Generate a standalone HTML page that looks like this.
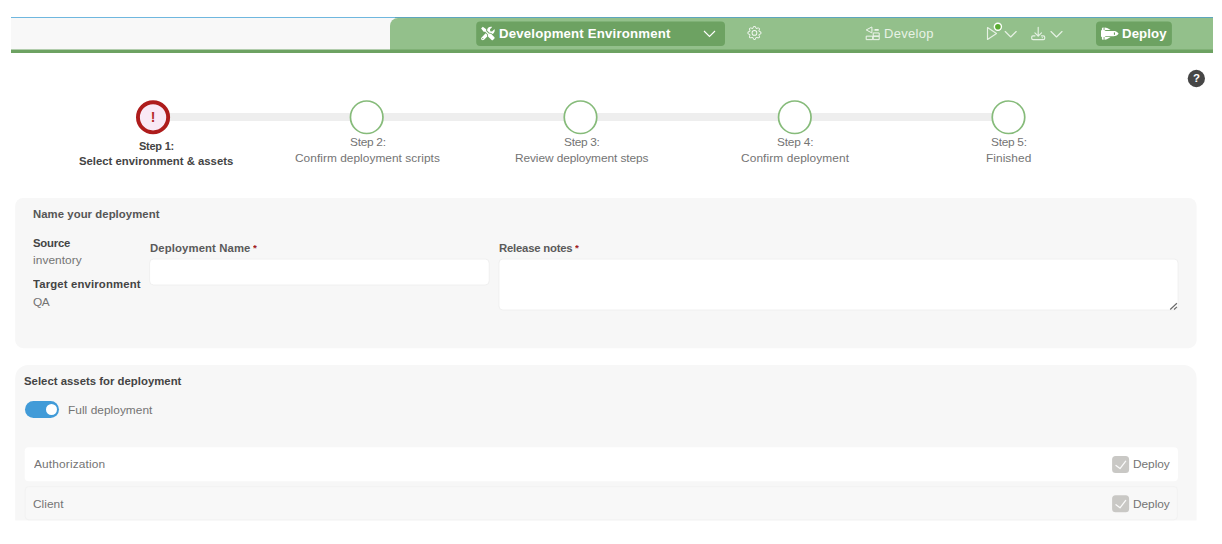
<!DOCTYPE html>
<html lang="en">
<head>
<meta charset="utf-8">
<title>Deploy</title>
<style>
*{box-sizing:border-box;margin:0;padding:0}
html,body{width:1222px;height:544px;overflow:hidden;background:#fff;font-family:"Liberation Sans",sans-serif;color:#4a4a4a}
.abs{position:absolute}
#hdr{left:11px;top:17px;width:1202px;height:36px;background:#f8f8f8;border-top:1px solid #6fb7df}
#gbar{left:0;top:31px;width:1202px;height:4px;background:linear-gradient(to bottom,rgba(109,162,98,.5) 0,rgba(109,162,98,.5) 1px,#6da262 1px)}
#tline{left:384px;top:-1px;width:818px;height:1px;background:#5ea6bd}
#tab{left:379px;top:0;width:823px;height:32px;background:#93c08b;border-top-left-radius:8px}
#envsel{left:476px;top:21.5px;width:249px;height:24.5px;background:#6da262;border-radius:4px}
.w{color:#fff}
.t{white-space:nowrap;line-height:1}
#deploybtn{left:1096px;top:21.5px;width:76px;height:24.5px;background:#6da262;border-radius:4px}
#help{left:1187.5px;top:69.5px;width:17.5px;height:17.5px;border-radius:50%;background:#3c3c3c;color:#fff;font-weight:bold;font-size:12px;text-align:center;line-height:17.5px}
#bar{left:153px;top:113px;width:856px;height:8px;background:#eeeeee}
.c{width:34.5px;height:34.5px;border-radius:50%;background:#fff;border:1.4px solid #82b775;top:100px}
.c1{border:4px solid #ae1c1c;background:#f9e9f5}
.st{font-size:11.2px;text-align:center;width:220px;line-height:15.3px;color:#555;letter-spacing:.35px}
.panel{background:#f7f7f7}
.lbl{font-weight:bold;font-size:11.2px;color:#444}
.val{font-size:11.2px;color:#555}
.inp{background:#fff;border:1px solid #eee;border-radius:4px}
.row{left:25px;width:1153px;height:34px;border-radius:4px}
.cb{width:17px;height:17px;border-radius:3px;background:#c9c9c5}
</style>
</head>
<body>
<div id="hdr" class="abs"><div id="tab" class="abs"></div><div id="gbar" class="abs"></div><div id="tline" class="abs"></div></div>

<svg id="hicons" class="abs" style="left:0;top:0" width="1222" height="60" viewBox="0 0 1222 60">
<rect x="476.200" y="21.400" width="248.800" height="24.500" rx="4" fill="#6da262"/><rect x="1096" y="21.400" width="75.900" height="24.500" rx="4" fill="#6da262"/>
<g transform="translate(481.100 26.700) scale(0.02656)"><path fill="#fff" d="M501.100 395.700L384 278.600c-23.100-23.100-57.600-27.600-85.400-13.900L192 158.100V96L64 0 0 64l96 128h62.100l106.600 106.600c-13.600 27.800-9.200 62.300 13.900 85.400l117.100 117.100c14.600 14.600 38.200 14.600 52.700 0l52.700-52.700c14.500-14.600 14.500-38.200 0-52.700zM331.700 225c28.300 0 54.900 11 74.900 31l19.400 19.400c15.800-6.900 30.800-16.500 43.800-29.500 37.100-37.100 49.700-89.300 37.900-136.700-2.200-9-13.500-12.100-20.100-5.500l-74.400 74.400-67.900-11.300L334 98.900l74.400-74.400c6.600-6.600 3.400-17.900-5.700-20.200-47.400-11.700-99.600.9-136.600 37.900-28.500 28.500-41.900 66.100-41.200 103.600l82.100 82.100c8.100-1.900 16.500-2.900 24.700-2.900zm-103.900 82l-56.700-56.700L18.700 402.800c-25 25-25 65.500 0 90.500s65.500 25 90.500 0l123.600-123.600c-7.600-19.900-9.900-41.600-5-62.700zM64 472c-13.200 0-24-10.800-24-24 0-13.300 10.700-24 24-24s24 10.700 24 24c0 13.200-10.700 24-24 24z"/></g>
<g transform="translate(703 30)"><path d="M1 1 L6.500 6.500 L12 1" fill="none" stroke="#fff" stroke-width="1.100"/></g>
<g transform="translate(747.450 25.900) scale(0.875)" opacity=".92"><g fill="#fff"><path d="M8 4.754a3.246 3.246 0 1 0 0 6.492 3.246 3.246 0 0 0 0-6.492zM5.754 8a2.246 2.246 0 1 1 4.492 0 2.246 2.246 0 0 1-4.492 0z"/><path d="M9.796 1.343c-.527-1.790-3.065-1.790-3.592 0l-.094.319a.873.873 0 0 1-1.255.520l-.292-.160c-1.640-.892-3.433.902-2.540 2.541l.159.292a.873.873 0 0 1-.520 1.255l-.319.094c-1.790.527-1.790 3.065 0 3.592l.319.094a.873.873 0 0 1 .520 1.255l-.160.292c-.892 1.640.901 3.434 2.541 2.540l.292-.159a.873.873 0 0 1 1.255.520l.094.319c.527 1.790 3.065 1.790 3.592 0l.094-.319a.873.873 0 0 1 1.255-.520l.292.160c1.640.893 3.434-.902 2.540-2.541l-.159-.292a.873.873 0 0 1 .520-1.255l.319-.094c1.790-.527 1.790-3.065 0-3.592l-.319-.094a.873.873 0 0 1-.520-1.255l.160-.292c.893-1.640-.902-3.433-2.541-2.540l-.292.159a.873.873 0 0 1-1.255-.520l-.094-.319zm-2.633.283c.246-.835 1.428-.835 1.674 0l.094.319a1.873 1.873 0 0 0 2.693 1.115l.291-.160c.764-.415 1.600.420 1.184 1.185l-.159.292a1.873 1.873 0 0 0 1.116 2.692l.318.094c.835.246.835 1.428 0 1.674l-.319.094a1.873 1.873 0 0 0-1.115 2.693l.160.291c.415.764-.420 1.600-1.185 1.184l-.291-.159a1.873 1.873 0 0 0-2.693 1.116l-.094.318c-.246.835-1.428.835-1.674 0l-.094-.319a1.873 1.873 0 0 0-2.692-1.115l-.292.160c-.764.415-1.600-.420-1.184-1.185l.159-.291A1.873 1.873 0 0 0 1.945 8.930l-.319-.094c-.835-.246-.835-1.428 0-1.674l.319-.094A1.873 1.873 0 0 0 3.060 4.377l-.160-.292c-.415-.764.420-1.600 1.185-1.184l.292.159a1.873 1.873 0 0 0 2.692-1.115l.094-.319z"/></g></g>
<g transform="translate(865.700 26.450)" opacity=".85"><g fill="none" stroke="#fff" stroke-width="1" stroke-linejoin="round"><path d="M0.500 3.500 L6.200 0.500 L6.200 6.500 Z"/><rect x="7.500" y="6.500" width="6" height="3.200"/><rect x="0.500" y="9.700" width="6.500" height="3.500"/><rect x="7.500" y="9.700" width="6" height="3.500"/></g><rect x="8.800" y="2.600" width="4.300" height="1.800" rx=".6" fill="#fff"/><path d="M6.200 3.500 H9" stroke="#fff" stroke-width=".7" stroke-opacity=".5"/></g>
<g><g fill="none" stroke="#e6f1e4" stroke-width="1.150" stroke-linecap="round" stroke-linejoin="round"><path d="M987.500 27.500 L996.500 33.500 L987.500 39.500 Z"/><path d="M1005.200 31.500 L1010.700 37 L1016.200 31.500"/><path d="M1051 31.500 L1056.500 37 L1062 31.500"/><path d="M1038.200 27.200 V36.200 M1034.900 32.900 L1038.200 36.200 L1041.500 32.900"/><path d="M1035 35.800 H1033 Q1031.700 35.800 1031.700 37.100 V38.300 Q1031.700 39.600 1033 39.600 H1043.400 Q1044.700 39.600 1044.700 38.300 V37.100 Q1044.700 35.800 1043.400 35.800 H1041.400"/></g><circle cx="1042.300" cy="37.700" r=".6" fill="#e6f1e4"/><circle cx="997.900" cy="26.800" r="4.200" fill="#fff"/><circle cx="997.900" cy="26.800" r="2.800" fill="#5aab32"/></g>
<g id="shuttle" transform="translate(1101 26.600) scale(0.02734)"><path fill="#fff" d="M130 480c40.600 0 80.400-11 115.200-31.900L352 384l-224 0 0 96h2zM352 128L245.200 63.900C210.400 43 170.600 32 130 32h-2v96l224 0zM96 128l0-96H80C53.500 32 32 53.500 32 80v48h8c-22.100 0-40 17.900-40 40v16V328v16c0 22.100 17.900 40 40 40H32v48c0 26.500 21.500 48 48 48H96l0-96h8c26.200 0 49.400-12.600 64-32H456c69.300 0 135-22.700 179.200-81.600c6.400-8.500 6.400-20.300 0-28.800C591 182.700 525.300 160 456 160H168c-14.600-19.400-37.800-32-64-32l-8 0zM512 243.600v24.900c0 19.600-15.900 35.600-35.600 35.600c-2.500 0-4.400-2-4.400-4.400V212.400c0-2.500 2-4.400 4.400-4.400c19.600 0 35.600 15.900 35.600 35.600z"/></g>
</svg>
<svg class="abs" style="left:1180px;top:65px" width="32" height="28" viewBox="1180 65 32 28"><circle cx="1196.350" cy="78.500" r="8.650" fill="#464646"/><text x="1196.400" y="82.400" text-anchor="middle" font-family="Liberation Sans, sans-serif" font-weight="bold" font-size="11.500" fill="#fff">?</text></svg>

<div id="bar" class="abs"></div>
<svg class="abs" style="left:0;top:95px" width="1222" height="45" viewBox="0 95 1222 45"><circle cx="153.050" cy="117.300" r="15.100" fill="#f9e9f6" stroke="#ae1c1c" stroke-width="3.900"/><g fill="#fff" stroke="#86bb7a" stroke-width="1.700"><circle cx="366.700" cy="117.250" r="16.250"/><circle cx="580.500" cy="117.250" r="16.250"/><circle cx="794.800" cy="117.250" r="16.250"/><circle cx="1008.500" cy="117.250" r="16.250"/></g></svg>
<div class="abs" style="left:143px;top:107.300px;width:20px;height:20px;line-height:20px;text-align:center;color:#b52a2a;font-weight:bold;font-size:14px">!</div>


<svg class="abs" style="left:0;top:190px" width="1222" height="354" viewBox="0 190 1222 354">
<rect x="15.200" y="197.900" width="1181.400" height="150.300" rx="8" fill="#f7f7f7"/>
<path d="M15.200 520.600 V378 a13 13 0 0 1 13 -13 H1183.600 a13 13 0 0 1 13 13 V520.600 Z" fill="#f7f7f7"/>
<rect x="149.600" y="259" width="339.600" height="26" rx="4" fill="#fff" stroke="#f0f0f0" stroke-width="1"/>
<rect x="498.900" y="259" width="679.200" height="51" rx="4" fill="#fff" stroke="#f0f0f0" stroke-width="1"/>
<path d="M1170.200 309.500 L1176.900 303.300 M1174 309.500 L1176.900 306.900" stroke="#6a6a6a" stroke-width="1.200" fill="none"/>
<rect x="24.700" y="447.200" width="1153.200" height="34" rx="4" fill="#fff"/>
<rect x="25.200" y="486.600" width="1152.200" height="33.200" rx="3.500" fill="#f8f8f8" stroke="#f2f2f2" stroke-width="1"/>
</svg>
<div class="abs" style="left:24.500px;top:400.800px;width:34.400px;height:17.300px;border-radius:9px;background:#419bd8"></div>
<div class="abs" style="left:45.700px;top:403.800px;width:11px;height:11px;border-radius:50%;background:#fff"></div>
<div class="abs" style="left:0;top:520.500px;width:1222px;height:24px;background:#fff"></div>
<svg class="abs" style="left:1112px;top:456px" width="18" height="57" viewBox="0 0 18 57"><g fill="#c9c8c5"><rect x=".100" y="0" width="17" height="17" rx="3.500"/><rect x=".100" y="39.200" width="17" height="17" rx="3.500"/></g><g fill="none" stroke="#fff" stroke-opacity=".9" stroke-width="1.300" stroke-linecap="round" stroke-linejoin="round"><path d="M4 9.500 L8 12.600 L13.700 5.200"/><path d="M4 48.700 L8 51.800 L13.700 44.400"/></g></svg>
<div id="t_env" class="abs t" style="left:499.07px;top:28.00px;font-size:12px;font-weight:bold;color:#fff;letter-spacing:0.168px;transform:scaleX(1.1);transform-origin:0 0;">Development Environment</div>
<div id="t_dev" class="abs t" style="left:884.03px;top:28.00px;font-size:12px;font-weight:normal;color:#e8f2e6;letter-spacing:0.302px;transform:scaleX(1.08);transform-origin:0 0;">Develop</div>
<div id="t_dep" class="abs t" style="left:1122.07px;top:28.00px;font-size:12px;font-weight:bold;color:#fff;letter-spacing:0.089px;transform:scaleX(1.1);transform-origin:0 0;">Deploy</div>
<div id="t_s1a" class="abs t" style="left:138.91px;top:141.00px;font-size:11px;font-weight:bold;color:#444;letter-spacing:-0.226px;transform:scaleX(1.0);transform-origin:0 0;">Step 1:</div>
<div id="t_s1b" class="abs t" style="left:79.15px;top:156.00px;font-size:11px;font-weight:bold;color:#444;letter-spacing:0.001px;transform:scaleX(1.03);transform-origin:0 0;">Select environment &amp; assets</div>
<div id="t_s2a" class="abs t" style="left:350.28px;top:137.00px;font-size:11px;font-weight:normal;color:#747474;letter-spacing:-0.254px;transform:scaleX(1.08);transform-origin:0 0;">Step 2:</div>
<div id="t_s2b" class="abs t" style="left:295.28px;top:153.00px;font-size:11px;font-weight:normal;color:#747474;letter-spacing:0.033px;transform:scaleX(1.08);transform-origin:0 0;">Confirm deployment scripts</div>
<div id="t_s3a" class="abs t" style="left:564.36px;top:137.00px;font-size:11px;font-weight:normal;color:#747474;letter-spacing:-0.276px;transform:scaleX(1.08);transform-origin:0 0;">Step 3:</div>
<div id="t_s3b" class="abs t" style="left:514.58px;top:153.00px;font-size:11px;font-weight:normal;color:#747474;letter-spacing:-0.081px;transform:scaleX(1.08);transform-origin:0 0;">Review deployment steps</div>
<div id="t_s4a" class="abs t" style="left:777.21px;top:137.00px;font-size:11px;font-weight:normal;color:#747474;letter-spacing:-0.182px;transform:scaleX(1.08);transform-origin:0 0;">Step 4:</div>
<div id="t_s4b" class="abs t" style="left:741.27px;top:153.00px;font-size:11px;font-weight:normal;color:#747474;letter-spacing:0.096px;transform:scaleX(1.08);transform-origin:0 0;">Confirm deployment</div>
<div id="t_s5a" class="abs t" style="left:991.12px;top:137.00px;font-size:11px;font-weight:normal;color:#747474;letter-spacing:-0.262px;transform:scaleX(1.08);transform-origin:0 0;">Step 5:</div>
<div id="t_s5b" class="abs t" style="left:986.17px;top:153.00px;font-size:11px;font-weight:normal;color:#747474;letter-spacing:0.048px;transform:scaleX(1.08);transform-origin:0 0;">Finished</div>
<div id="t_nm" class="abs t" style="left:32.53px;top:209.00px;font-size:11px;font-weight:bold;color:#555;letter-spacing:0.057px;transform:scaleX(1.03);transform-origin:0 0;">Name your deployment</div>
<div id="t_src" class="abs t" style="left:33.21px;top:238.00px;font-size:11px;font-weight:bold;color:#444;letter-spacing:-0.204px;transform:scaleX(1.03);transform-origin:0 0;">Source</div>
<div id="t_inv" class="abs t" style="left:32.68px;top:255.00px;font-size:11px;font-weight:normal;color:#747474;letter-spacing:0.063px;transform:scaleX(1.08);transform-origin:0 0;">inventory</div>
<div id="t_tgt" class="abs t" style="left:33.32px;top:279.00px;font-size:11px;font-weight:bold;color:#444;letter-spacing:0.147px;transform:scaleX(1.03);transform-origin:0 0;">Target environment</div>
<div id="t_qa" class="abs t" style="left:32.65px;top:297.00px;font-size:11px;font-weight:normal;color:#747474;letter-spacing:-0.421px;transform:scaleX(1.08);transform-origin:0 0;">QA</div>
<div id="t_dn" class="abs t" style="left:149.80px;top:243.00px;font-size:11px;font-weight:bold;color:#5a5a5a;letter-spacing:0.108px;transform:scaleX(1.03);transform-origin:0 0;">Deployment Name</div>
<div id="t_dnx" class="abs t" style="left:253.30px;top:243.60px;font-size:9px;font-weight:bold;color:#a01c1c;letter-spacing:0.000px;transform:scaleX(1.1);transform-origin:0 0;">*</div>
<div id="t_rn" class="abs t" style="left:498.72px;top:243.00px;font-size:11px;font-weight:bold;color:#5a5a5a;letter-spacing:-0.209px;transform:scaleX(1.03);transform-origin:0 0;">Release notes</div>
<div id="t_rnx" class="abs t" style="left:575.20px;top:243.60px;font-size:9px;font-weight:bold;color:#a01c1c;letter-spacing:0.000px;transform:scaleX(1.1);transform-origin:0 0;">*</div>
<div id="t_sa" class="abs t" style="left:23.70px;top:376.00px;font-size:11px;font-weight:bold;color:#444;letter-spacing:0.021px;transform:scaleX(1.03);transform-origin:0 0;">Select assets for deployment</div>
<div id="t_fd" class="abs t" style="left:67.63px;top:405.00px;font-size:11px;font-weight:normal;color:#747474;letter-spacing:0.035px;transform:scaleX(1.08);transform-origin:0 0;">Full deployment</div>
<div id="t_au" class="abs t" style="left:33.96px;top:459.00px;font-size:11px;font-weight:normal;color:#747474;letter-spacing:0.142px;transform:scaleX(1.08);transform-origin:0 0;">Authorization</div>
<div id="t_cl" class="abs t" style="left:33.29px;top:499.00px;font-size:11px;font-weight:normal;color:#747474;letter-spacing:0.015px;transform:scaleX(1.08);transform-origin:0 0;">Client</div>
<div id="t_d1" class="abs t" style="left:1132.70px;top:459.00px;font-size:11px;font-weight:normal;color:#747474;letter-spacing:-0.051px;transform:scaleX(1.08);transform-origin:0 0;">Deploy</div>
<div id="t_d2" class="abs t" style="left:1132.77px;top:499.00px;font-size:11px;font-weight:normal;color:#747474;letter-spacing:-0.050px;transform:scaleX(1.08);transform-origin:0 0;">Deploy</div>
</body>
</html>
